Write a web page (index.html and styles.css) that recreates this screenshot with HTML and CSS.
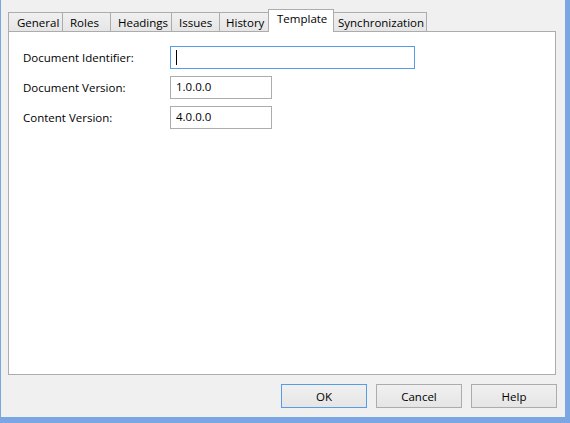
FILE: index.html
```html
<!DOCTYPE html>
<html lang="en">
<head>
<meta charset="utf-8">
<title>Properties</title>
<link rel="stylesheet" href="styles.css">
</head>
<body>
<div class="window">
  <div class="tabs">
    <div class="tab tab-general">General</div>
    <div class="tab tab-roles">Roles</div>
    <div class="tab tab-headings">Headings</div>
    <div class="tab tab-issues">Issues</div>
    <div class="tab tab-history">History</div>
    <div class="tab tab-template selected">Template</div>
    <div class="tab tab-sync">Synchronization</div>
  </div>
  <div class="panel">
    <div class="form">
      <label class="label">Document Identifier:</label>
      <div class="field field-wide focused"><span class="caret"></span></div>
      <label class="label">Document Version:</label>
      <div class="field">1.0.0.0</div>
      <label class="label">Content Version:</label>
      <div class="field">4.0.0.0</div>
    </div>
  </div>
  <div class="buttons">
    <button class="btn default">OK</button>
    <button class="btn">Cancel</button>
    <button class="btn">Help</button>
  </div>
</div>
</body>
</html>
```
FILE: styles.css
```css
* {
  box-sizing: border-box;
}

html, body {
  margin: 0;
  padding: 0;
}

body {
  width: 570px;
  height: 423px;
  background: #7aa6e2;
  font-family: "Open Sans", "Noto Sans", sans-serif;
  font-size: 11.5px;
  color: #000;
  overflow: hidden;
}

.window {
  margin-left: 1px;
  width: 564px;
  height: 417px;
  background: #f0f0f0;
  padding: 9px 9px 0 7px;
  display: flex;
  flex-direction: column;
}

/* tab strip */
.tabs {
  display: flex;
  align-items: flex-end;
  height: 23px;
  margin-bottom: -1px;
}

.tab {
  height: 20px;
  border: 1px solid #acacac;
  border-bottom: none;
  margin-left: -1px;
  background: linear-gradient(#f0f0f0, #e5e5e5);
  padding: 2px 0 0 8px;
  line-height: 16px;
  white-space: nowrap;
}

.tab:first-child {
  margin-left: 0;
}

.tab.selected {
  position: relative;
  z-index: 1;
  height: 23px;
  background: #fff;
  padding: 1px 0 0 8px;
}

.tab-general { width: 55px; }
.tab-roles { width: 49px; padding-left: 7px; }
.tab-headings { width: 62px; padding-left: 7px; }
.tab-issues { width: 49px; padding-left: 7px; }
.tab-history { width: 50px; padding-left: 6px; }
.tab-template { width: 66px; }
.tab-sync { width: 94px; padding-left: 4px; }

/* page body */
.panel {
  position: relative;
  width: 548px;
  height: 344px;
  background: #fff;
  border: 1px solid #acacac;
  padding: 14px 0 0 14px;
}

.form {
  display: grid;
  grid-template-columns: 147px auto;
  row-gap: 7px;
  align-items: center;
}

.label {
  line-height: 16px;
}

.field {
  width: 102px;
  height: 23px;
  border: 1px solid #acacac;
  background: #fff;
  padding: 0 0 0 5px;
  line-height: 20px;
}

.field-wide {
  width: 245px;
}

.field.focused {
  border-color: #569de5;
  display: flex;
  align-items: center;
}

.caret {
  display: block;
  width: 1px;
  height: 15px;
  background: #000;
}

/* dialog buttons */
.buttons {
  display: flex;
  justify-content: flex-end;
  gap: 9px;
  margin: 9px -1px 0 0;
}

.btn {
  width: 86px;
  height: 24px;
  border: 1px solid #acacac;
  background: linear-gradient(#f0f0f0, #e5e5e5);
  font-family: inherit;
  font-size: inherit;
  color: #000;
  padding: 0;
  margin: 0;
}

.btn.default {
  border-color: #3399ff;
  border-color: #569de5;
}
```
